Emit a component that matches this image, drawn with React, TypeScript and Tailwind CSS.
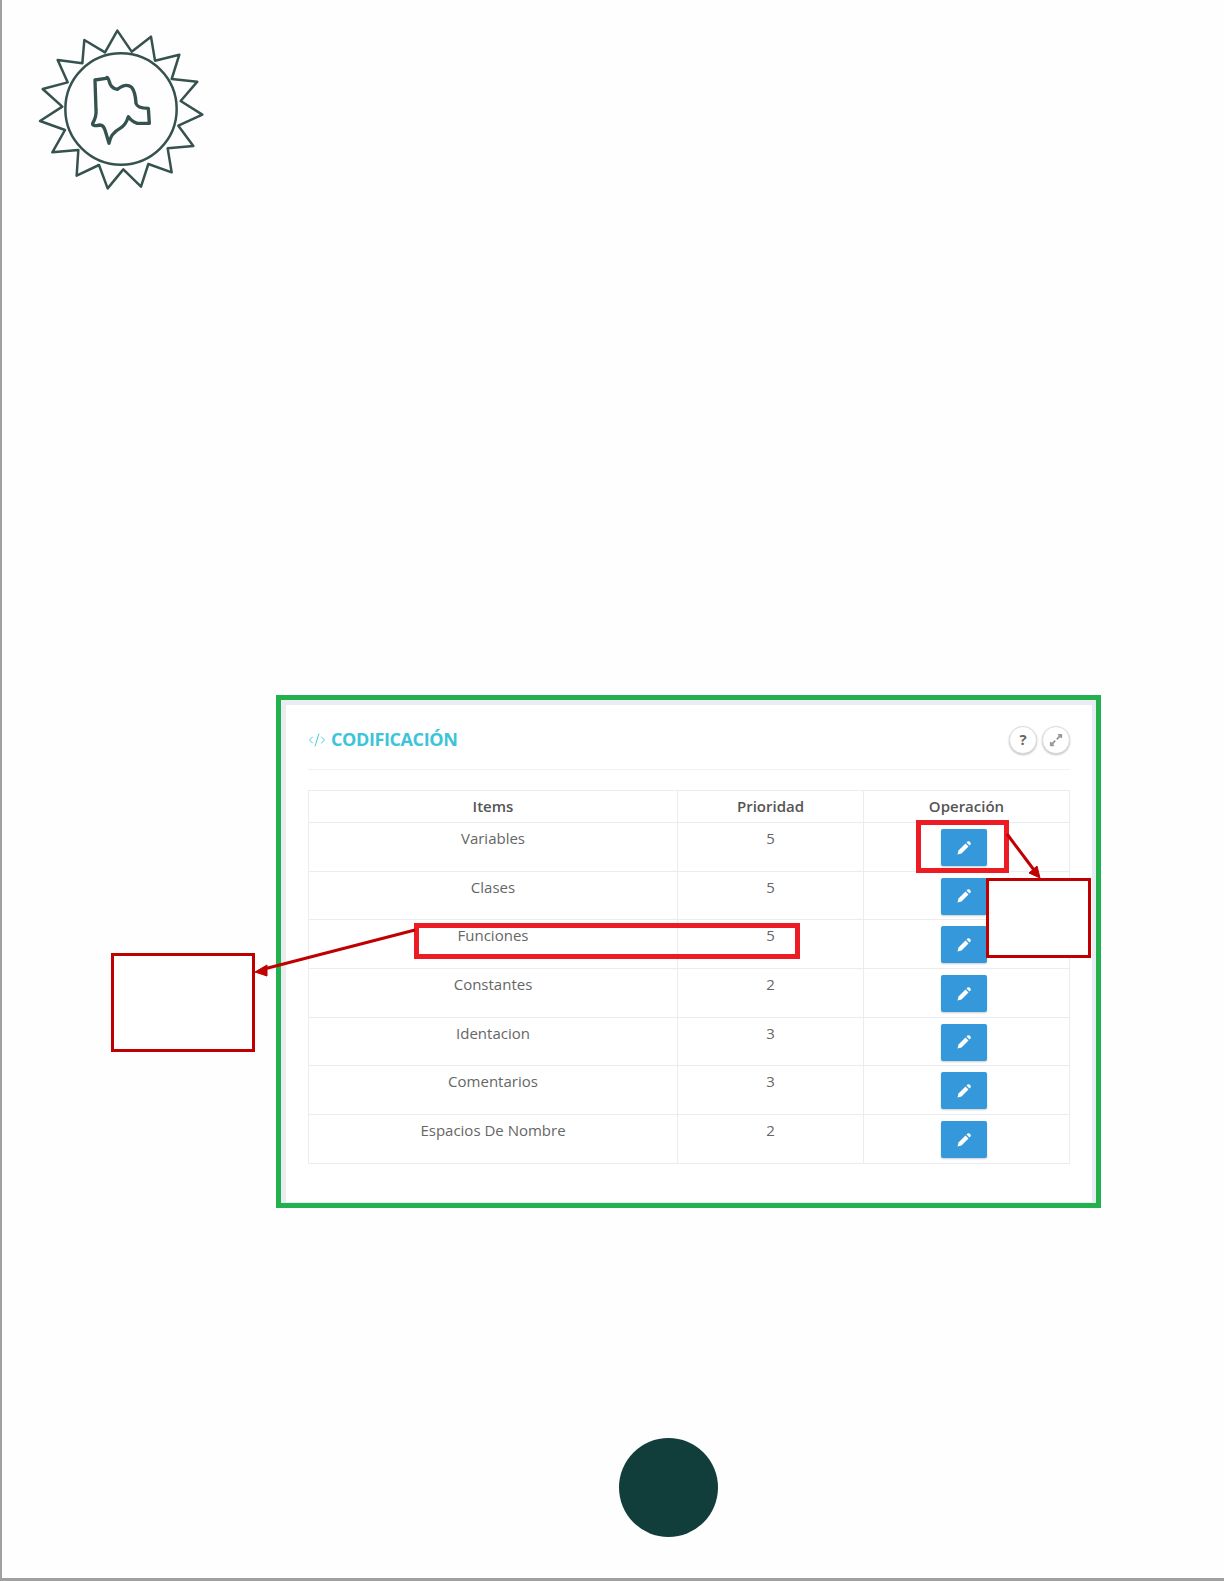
import { CodeXml } from 'lucide-react';
import { FaExpandAlt } from 'react-icons/fa';

const ROWS = [
  { item: 'Variables', priority: 5 },
  { item: 'Clases', priority: 5 },
  { item: 'Funciones', priority: 5 },
  { item: 'Constantes', priority: 2 },
  { item: 'Identacion', priority: 3 },
  { item: 'Comentarios', priority: 3 },
  { item: 'Espacios De Nombre', priority: 2 },
];

const SUN =
  '292,62 335,125 393,80 405,152 478,134 455,207 532,215 482,273 547,314 475,347 520,408 443,415 455,487 385,462 363,530 310,478 263,535 237,465 170,497 175,420 97,427 135,360 60,333 127,290 68,237 143,217 113,150 187,160 193,90 255,127';
const MAP =
  'M225 210 L258 205 Q262 196 268 215 Q272 235 292 238 Q318 218 335 232 Q346 245 348 280 Q352 295 385 295 L388 340 L352 340 Q335 335 325 320 Q318 345 300 355 Q272 370 267 400 L255 360 Q250 345 240 345 Q215 350 218 340 Q230 320 228 300 Z';

function Logo() {
  return (
    <svg width="210" height="200" viewBox="0 0 630 600" fill="none" stroke="#35524e" strokeLinejoin="round" className="block">
      <polygon points={SUN} strokeWidth="7.5" />
      <circle cx="303" cy="297" r="167" strokeWidth="7.5" />
      <path d={MAP} strokeWidth="10" />
    </svg>
  );
}

function PencilIcon() {
  return (
    <svg width="16" height="16" viewBox="0 0 16 16" fill="currentColor">
      <path d="M1.5 14.5 L2.5 10.5 L9.5 3.5 L12.5 6.5 L5.5 13.5 Z" />
      <path d="M10.5 2.5 L11.5 1.5 Q12.5 0.8 13.5 1.5 L14.5 2.5 Q15.2 3.5 14.5 4.5 L13.5 5.5 Z" />
    </svg>
  );
}

function RoundButton({ children }: { children: React.ReactNode }) {
  return (
    <button
      type="button"
      className="flex h-[28px] w-[28px] items-center justify-center rounded-full border border-[#dcdcdc] bg-white text-[#666] shadow-[0_1px_2px_rgba(0,0,0,0.25)]"
    >
      {children}
    </button>
  );
}

// annotation boxes and arrows drawn on top of the page
function Annotations() {
  return (
    <>
      <div className="absolute left-[914px] top-[820px] h-[53px] w-[93px] border-[5px] border-[#ed1c24]" />
      <div className="absolute left-[412px] top-[923px] h-[36px] w-[386px] border-[5px] border-[#ed1c24]" />
      <div className="absolute left-[984px] top-[878px] h-[80px] w-[105px] border-[3px] border-[#c00000] bg-white" />
      <div className="absolute left-[109px] top-[953px] h-[99px] w-[144px] border-[3px] border-[#c00000] bg-white" />
      <svg width="1224" height="1581" className="pointer-events-none absolute left-[-2px] top-0">
        <line x1="1007" y1="834" x2="1034" y2="870" stroke="#c00000" strokeWidth="3" />
        <polygon points="1040,878 1029,873 1037,866" fill="#c00000" stroke="#c00000" />
        <line x1="415" y1="930" x2="264" y2="969" stroke="#c00000" strokeWidth="3" />
        <polygon points="255,972 267,965 267,976" fill="#c00000" stroke="#c00000" />
      </svg>
    </>
  );
}

export default function App() {
  return (
    <div className="relative h-[1581px] w-[1224px] overflow-hidden border-b-[3px] border-l-2 border-[#a0a0a0] bg-[#fefefe] font-['Open_Sans',sans-serif]">
      <div className="ml-[18px] pt-[10px]">
        <Logo />
      </div>

      <div className="ml-[274px] mt-[485px] h-[513px] w-[825px] border-[5px] border-[#22b14c]">
        <div className="h-full border-[5px] border-b border-r-4 border-[#e9ecf1] bg-white px-[22px]">
          <div className="flex h-[65px] items-center justify-between border-b border-[#eef1f5] pt-[5px]">
            <h2 className="flex items-center gap-[5px] text-[18px] font-bold tracking-[-0.4px] text-[#3dc4d8]">
              <CodeXml size={18} strokeWidth={1.25} className="text-[#3dc4d8]" />
              CODIFICACIÓN
            </h2>
            <div className="flex gap-[5px]">
              <RoundButton>
                <span className="text-[15px] font-bold leading-none">?</span>
              </RoundButton>
              <RoundButton>
                <FaExpandAlt size={14} className="text-[#999]" />
              </RoundButton>
            </div>
          </div>

          <table className="mt-[20px] w-[761px] table-fixed border-collapse border border-[#e9edf2] text-center text-[15px] text-[#666]">
            <colgroup>
              <col className="w-[369px]" />
              <col className="w-[186px]" />
              <col className="w-[206px]" />
            </colgroup>
            <thead>
              <tr className="h-[32px] font-semibold text-[#555]">
                <th className="border border-[#e9edf2] font-semibold">Items</th>
                <th className="border border-[#e9edf2] font-semibold">Prioridad</th>
                <th className="border border-[#e9edf2] font-semibold">Operación</th>
              </tr>
            </thead>
            <tbody>
              {ROWS.map((row) => (
                <tr key={row.item} className="h-[48.7px]">
                  <td className="border border-[#e9edf2] pt-[6px] align-top leading-[19px]">{row.item}</td>
                  <td className="border border-[#e9edf2] pt-[6px] align-top leading-[19px]">{row.priority}</td>
                  <td className="border border-[#e9edf2] align-top">
                    <button
                      type="button"
                      className="mr-[5px] mt-[6px] inline-flex h-[37px] w-[46px] items-center justify-center rounded-[2px] bg-[#3498db] align-top text-white shadow-[0_1px_2px_rgba(0,0,0,0.2)]"
                    >
                      <PencilIcon />
                    </button>
                  </td>
                </tr>
              ))}
            </tbody>
          </table>
        </div>
      </div>

      <div className="ml-[617px] mt-[230px] h-[99px] w-[99px] rounded-full bg-[#113d3a]" />

      <Annotations />
    </div>
  );
}
